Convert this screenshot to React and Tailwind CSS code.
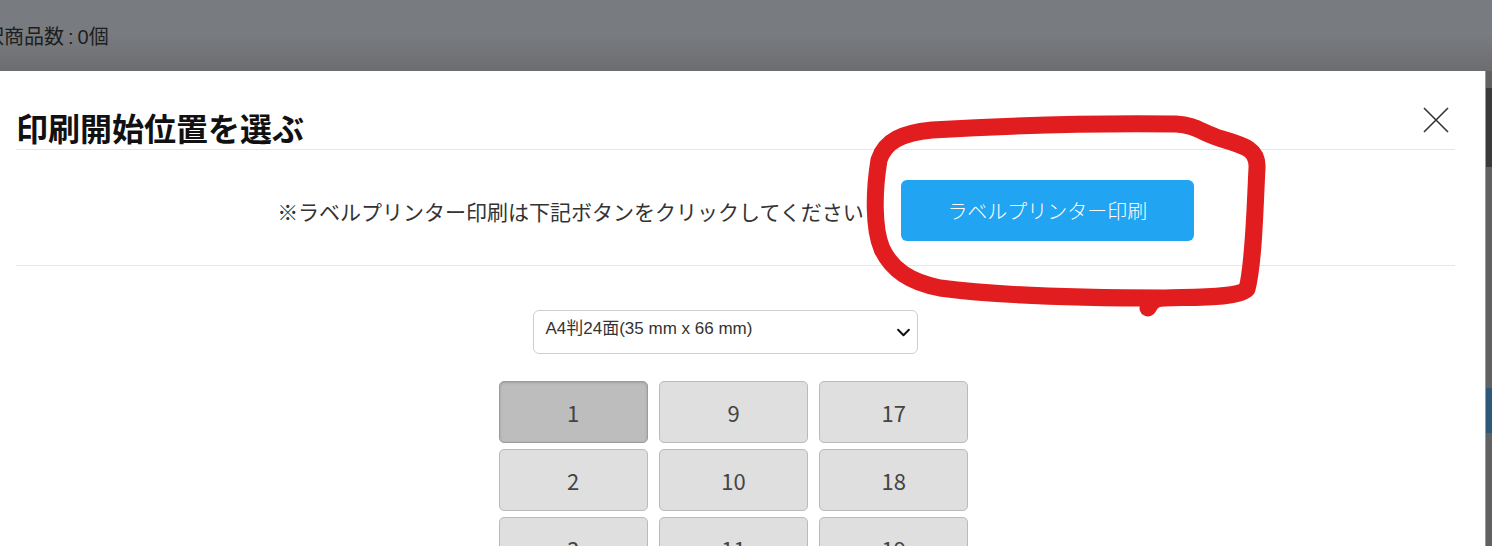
import React from 'react';

const jp = { fontFamily: '"Noto Sans CJK JP", "Noto Sans", sans-serif' };
const latin = { fontFamily: '"Liberation Sans", "Noto Sans CJK JP", sans-serif' };

const cells = [];
for (let r = 0; r < 8; r++) {
  for (let c = 0; c < 3; c++) {
    cells.push(c * 8 + r + 1);
  }
}

const App = () => {
  const selected = 1;

  return (
    <div className="relative w-full h-[546px] overflow-hidden bg-[#77797d] flex flex-col" style={jp}>
      {/* page behind the overlay */}
      <div className="h-[71px] shrink-0 bg-gradient-to-b from-[#787b7f] via-[#787b7f] to-[#6c6d70] pt-[22px]">
        <span className="inline-block -ml-[36px] text-[20px] leading-[28px] text-[#1d1e20]">選択商品数<span style={latin}>{'\u2009:\u2009'}0</span>個</span>
      </div>

      <div className="flex flex-1 min-h-0">
        <div className="relative w-[1486px] shrink-0 bg-white pl-4 pr-[30px] border-r border-[#9a9a9a]">
          {/* close */}
          <button className="absolute top-[36px] right-[36px] w-[26px] h-[26px]">
            <svg viewBox="0 0 26 26" className="w-[26px] h-[26px]">
              <path d="M1 1 L25 25 M25 1 L1 25" stroke="#333" strokeWidth="1.6" fill="none" />
            </svg>
          </button>

          <div className="h-[79px] flex items-end pb-[3px] border-b border-[#e6e6e6]">
            <h2 className="text-[32px] leading-[37px] font-bold text-[#111]">印刷開始位置を選ぶ</h2>
          </div>

          <div className="pt-[30px] pb-[24px] flex items-center justify-center gap-[37px] border-b border-[#e6e6e6]">
            <p className="text-[21px] leading-[30px] text-[#333]">※ラベルプリンター印刷は下記ボタンをクリックしてください</p>
            <button className="w-[293px] h-[61px] rounded-[6px] bg-[#21a4f1] text-white text-[20px] font-light">
              ラベルプリンター印刷
            </button>
          </div>

          <div className="w-[470px] mx-auto -translate-x-[2px] pt-[44px]">
            <div className="ml-[34px] w-[385px] h-[44px] border border-[#cfcfcf] rounded-[6px] flex items-center justify-between pl-[12px] pr-[6px]">
              <span className="text-[17px] leading-[20px] -mt-[6px] text-[#333]" style={latin}>A4判24面(35 mm x 66 mm)</span>
              <svg viewBox="0 0 16 10" className="w-[15px] h-[9px]">
                <path d="M2 2 L8 8 L14 2" stroke="#111" strokeWidth="2.2" fill="none" strokeLinecap="round" strokeLinejoin="round" />
              </svg>
            </div>

            <div className="mt-[27px] grid grid-cols-3 gap-x-[11px] gap-y-[6px]">
              {cells.map((n) => (
                <button
                  key={n}
                  className={`h-[62px] rounded-[5px] border text-[22px] text-[#444] ${
                    n === selected
                      ? 'bg-[#bdbdbd] border-[#9b9b9b] shadow-[inset_0_1px_3px_rgba(0,0,0,0.15)]'
                      : 'bg-[#dfdfdf] border-[#bababa]'
                  }`}
                >
                  {n}
                </button>
              ))}
            </div>
          </div>
        </div>

        <div className="flex-1 bg-[#5f6163] flex flex-col">
          <div className="h-[17px]" />
          <div className="h-[79px] bg-[#393a3b]" />
          <div className="h-[221px]" />
          <div className="h-[45px] bg-[#2d5877]" />
        </div>
      </div>

      {/* hand-drawn annotation */}
      <svg className="absolute inset-0 pointer-events-none" width="1492" height="546" viewBox="0 0 1492 546">
        <path
          d="M1148 308 C1152 300 1156 298 1165 298 C1200 297 1238 298 1247 289 C1254 262 1255 205 1257 168 C1258 150 1246 146 1222 139 C1202 133 1196 125 1176 124 C1100 123 1000 126 932 130 C902 133 885 141 879 160 C874 190 873 228 882 249 C892 270 910 282 940 288 C1000 296 1100 298 1165 298"
          stroke="#e21d1f"
          strokeWidth="17"
          fill="none"
          strokeLinecap="round"
          strokeLinejoin="round"
        />
      </svg>
    </div>
  );
};

export default App;
